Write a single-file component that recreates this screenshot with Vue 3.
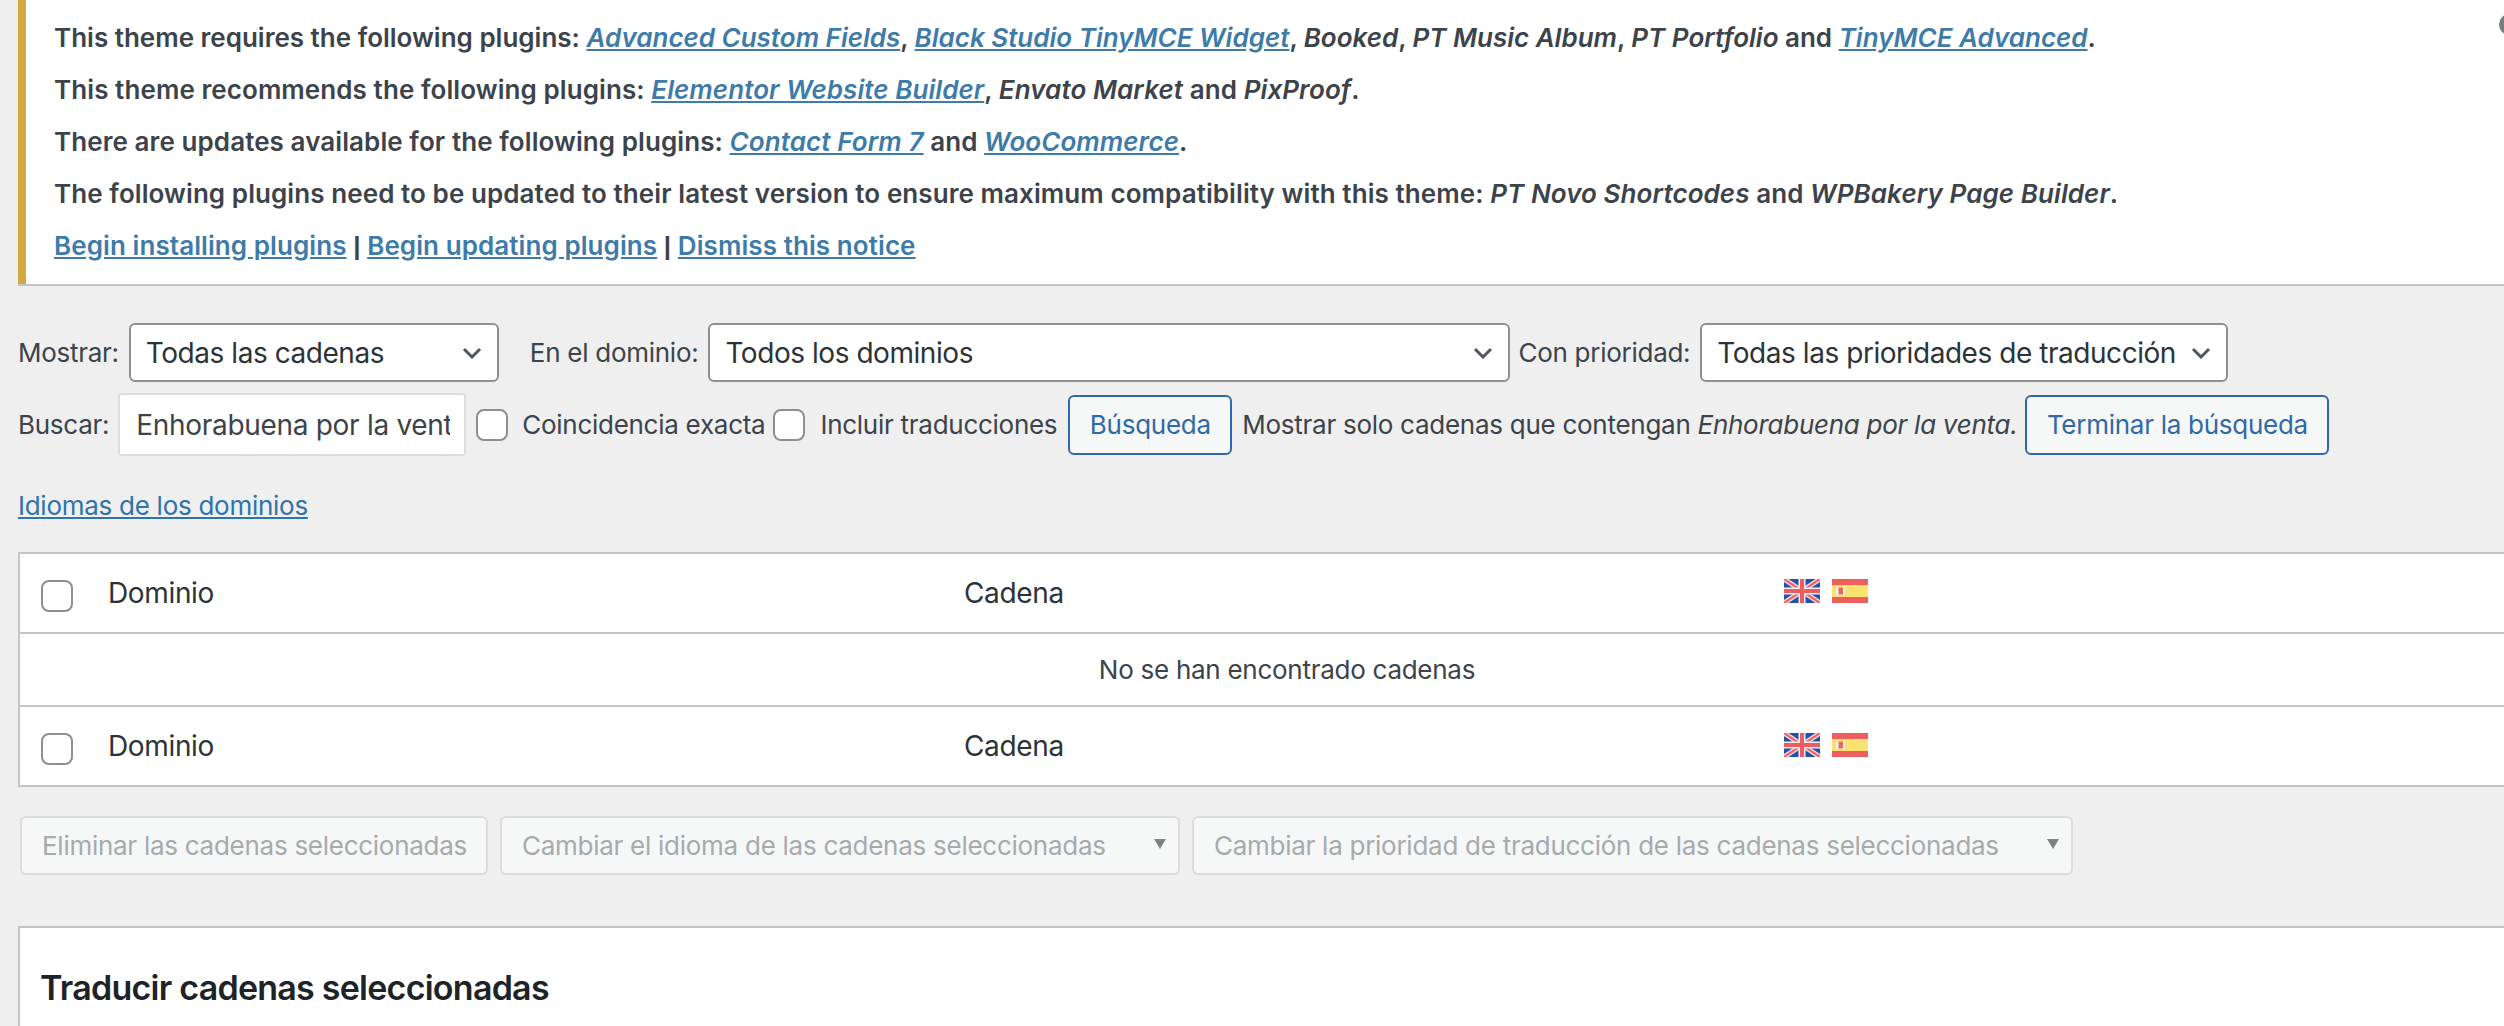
<script setup>
const filters = ['Todas las cadenas']
</script>

<template>
  <div class="page">
    <div class="notice">
      <span class="dismiss"></span>
      <p class="tight">This theme requires the following plugins: <a><em>Advanced Custom Fields</em></a>, <a><em>Black Studio TinyMCE Widget</em></a>, <em>Booked</em>, <em>PT Music Album</em>, <em>PT Portfolio</em> and <a><em>TinyMCE Advanced</em></a>.</p>
      <p>This theme recommends the following plugins: <a><em>Elementor Website Builder</em></a>, <em>Envato Market</em> and <em>PixProof</em>.</p>
      <p>There are updates available for the following plugins: <a><em>Contact Form 7</em></a> and <a><em>WooCommerce</em></a>.</p>
      <p>The following plugins need to be updated to their latest version to ensure maximum compatibility with this theme: <em>PT Novo Shortcodes</em> and <em>WPBakery Page Builder</em>.</p>
      <p><a>Begin installing plugins</a> <span class="sep">|</span> <a>Begin updating plugins</a> <span class="sep">|</span> <a>Dismiss this notice</a></p>
    </div>

    <div class="content">
      <div class="filter-row first">
        <label>Mostrar:</label>
        <select class="sel sel-a"><option>{{ filters[0] }}</option></select>
        <label class="l-dom">En el dominio:</label>
        <select class="sel sel-b"><option>Todos los dominios</option></select>
        <label class="l-pri">Con prioridad:</label>
        <select class="sel sel-c"><option>Todas las prioridades de traducción</option></select>
      </div>

      <div class="filter-row second">
        <label>Buscar:</label>
        <input class="search" type="text" value="Enhorabuena por la venta" />
        <span class="check c-one"></span>
        <label class="l-exact">Coincidencia exacta</label>
        <span class="check c-two"></span>
        <label class="l-incl">Incluir traducciones</label>
        <button class="btn b-search">Búsqueda</button>
        <span class="showing">Mostrar solo cadenas que contengan <em>Enhorabuena por la venta.</em></span>
        <button class="btn b-end">Terminar la búsqueda</button>
      </div>

      <a class="domains">Idiomas de los dominios</a>

      <table class="strings">
        <colgroup>
          <col class="w1" /><col class="w2" /><col class="w3" /><col />
        </colgroup>
        <thead>
          <tr class="head">
            <th class="cb"><span class="check"></span></th>
            <th>Dominio</th>
            <th>Cadena</th>
            <th>
              <span class="flags">
                <svg class="flag" viewBox="0 0 36 24"><rect width="36" height="24" fill="#2450a8" /><path d="M0 0 36 24M36 0 0 24" stroke="#f3d5d8" stroke-width="5" /><path d="M0 0 36 24M36 0 0 24" stroke="#ee6064" stroke-width="2" /><path d="M18 0V24M0 12H36" stroke="#f7f0f2" stroke-width="7" /><path d="M18 0V24M0 12H36" stroke="#ee5c60" stroke-width="4" /></svg>
                <svg class="flag" viewBox="0 0 36 24"><rect width="36" height="24" fill="#ee5e5c" /><rect y="6" width="36" height="12" fill="#fae170" /><rect x="4" y="8" width="9" height="8" fill="#f2f0e8" /><rect x="6.5" y="8.5" width="4.5" height="7" fill="#ec6a50" /></svg>
              </span>
            </th>
          </tr>
        </thead>
        <tbody>
          <tr class="empty"><td colspan="4">No se han encontrado cadenas</td></tr>
        </tbody>
        <tfoot>
          <tr class="foot">
            <th class="cb"><span class="check"></span></th>
            <th>Dominio</th>
            <th>Cadena</th>
            <th>
              <span class="flags">
                <svg class="flag" viewBox="0 0 36 24"><rect width="36" height="24" fill="#2450a8" /><path d="M0 0 36 24M36 0 0 24" stroke="#f3d5d8" stroke-width="5" /><path d="M0 0 36 24M36 0 0 24" stroke="#ee6064" stroke-width="2" /><path d="M18 0V24M0 12H36" stroke="#f7f0f2" stroke-width="7" /><path d="M18 0V24M0 12H36" stroke="#ee5c60" stroke-width="4" /></svg>
                <svg class="flag" viewBox="0 0 36 24"><rect width="36" height="24" fill="#ee5e5c" /><rect y="6" width="36" height="12" fill="#fae170" /><rect x="4" y="8" width="9" height="8" fill="#f2f0e8" /><rect x="6.5" y="8.5" width="4.5" height="7" fill="#ec6a50" /></svg>
              </span>
            </th>
          </tr>
        </tfoot>
      </table>

      <div class="actions">
        <button class="dis d-del" disabled>Eliminar las cadenas seleccionadas</button>
        <button class="dis d-lang" disabled>Cambiar el idioma de las cadenas seleccionadas<i class="tri"></i></button>
        <button class="dis d-prio" disabled>Cambiar la prioridad de traducción de las cadenas seleccionadas<i class="tri"></i></button>
      </div>

      <section class="panel">
        <h3>Traducir cadenas seleccionadas</h3>
      </section>
    </div>
  </div>
</template>

<style>
html, body { margin: 0; background: #efefef; overflow: hidden; }
</style>

<style scoped>
.page {
  width: 2504px;
  height: 1026px;
  overflow: hidden;
  background: #efefef;
  color: #3c434a;
  font-family: Inter, "Noto Sans", sans-serif;
  font-size: 26px;
  letter-spacing: -0.27px;
}
.notice {
  position: relative;
  margin-left: 18px;
  height: 260px;
  padding: 12px 0 12px 28px;
  background: #fff;
  border-left: 8px solid #d6a840;
  box-shadow: 0 2px 0 #c3c4c7;
  font-weight: 600;
  letter-spacing: 0.08px;
}
.notice p { margin: 0; line-height: 52px; }
.notice .tight { letter-spacing: 0; }
.notice a { color: #3e7ba8; text-decoration: underline; }
.sep { font-family: "Liberation Sans", sans-serif; }
.dismiss {
  position: absolute;
  left: 2473px;
  top: 14px;
  width: 21px;
  height: 21px;
  border-radius: 50%;
  background: #787c82;
}
.content { padding: 39px 0 0 18px; }
.filter-row { display: flex; align-items: center; white-space: nowrap; }
.first { height: 59px; }
.second { height: 63px; margin-top: 11px; }
.sel {
  appearance: none;
  box-sizing: border-box;
  height: 59px;
  margin: 0;
  padding: 0 30px 0 15px;
  background: #fff url("data:image/svg+xml,%3Csvg xmlns='http://www.w3.org/2000/svg' width='20' height='12'%3E%3Cpath d='M2 2l8 8 8-8' fill='none' stroke='%2350575e' stroke-width='3'/%3E%3C/svg%3E") no-repeat right 15px center;
  border: 2px solid #8c8f94;
  border-radius: 6px;
  color: #2c3338;
  font: inherit;
  font-size: 28px;
  letter-spacing: -0.45px;
}
.sel-a { width: 370px; margin-left: 10px; }
.sel-b { width: 802px; margin-left: 10px; }
.sel-c { width: 528px; margin-left: 10px; }
.l-dom { margin-left: 31px; }
.l-pri { margin-left: 8px; }
.search {
  box-sizing: border-box;
  width: 348px;
  height: 63px;
  margin: 0 0 0 9px;
  padding: 0 14px 0 16px;
  background: #fff;
  border: 2px solid #dcdcde;
  border-radius: 4px;
  color: #3c434a;
  font: inherit;
  font-size: 28px;
  letter-spacing: -0.3px;
  outline: none;
}
.check {
  display: inline-block;
  flex: none;
  box-sizing: border-box;
  width: 32px;
  height: 32px;
  background: #fff;
  border: 2px solid #8c8f94;
  border-radius: 8px;
}
.c-one { margin-left: 10px; }
.c-two { margin-left: 8px; }
.l-exact { margin-left: 14px; }
.l-incl { margin-left: 15px; }
.btn {
  box-sizing: border-box;
  height: 60px;
  margin: 0;
  background: #f6f7f7;
  border: 2px solid #2f69a8;
  border-radius: 6px;
  color: #2f69a8;
  font: inherit;
  letter-spacing: inherit;
}
.b-search { width: 164px; margin-left: 11px; }
.b-end { width: 304px; margin-left: 8px; }
.showing { margin-left: 10px; }
.domains {
  display: block;
  margin-top: 32px;
  line-height: 36px;
  color: #2f73ab;
  text-decoration: underline;
}
.strings {
  width: 2538px;
  margin-top: 28px;
  border: 2px solid #c3c4c7;
  border-collapse: separate;
  border-spacing: 0;
  table-layout: fixed;
  background: #fff;
  font-size: 26px;
}
.w1 { width: 88px; }
.w2 { width: 856px; }
.w3 { width: 820px; }
.strings th { padding: 0; font-size: 28px; letter-spacing: -0.35px; font-weight: 400; text-align: left; color: #2c3338; }
.head th { height: 78px; border-bottom: 2px solid #c3c4c7; }
.empty td { height: 71px; text-align: center; padding: 0; }
.foot th { height: 78px; border-top: 2px solid #c3c4c7; }
.strings .cb { padding-left: 21px; }
.strings .cb .check { display: block; margin-top: 6px; }
.flags { display: flex; gap: 12px; margin-top: -4px; }
.foot .flags { margin-top: -3px; }
.flag { display: block; width: 36px; height: 24px; }
.actions { display: flex; margin-top: 29px; margin-left: 2px; gap: 12px; }
.dis {
  position: relative;
  box-sizing: border-box;
  height: 59px;
  margin: 0;
  padding: 0;
  text-align: left;
  background: #f6f7f7;
  border: 2px solid #dcdcde;
  border-radius: 6px;
  color: #a7aaad;
  font: inherit;
  letter-spacing: inherit;
}
.d-del { width: 468px; padding-left: 20px; }
.d-lang { width: 680px; padding-left: 20px; }
.d-prio { width: 881px; padding-left: 20px; }
.tri {
  position: absolute;
  right: 12px;
  top: 21px;
  width: 0;
  height: 0;
  border-left: 6px solid transparent;
  border-right: 6px solid transparent;
  border-top: 10px solid #808285;
}
.panel {
  box-sizing: border-box;
  width: 2538px;
  height: 200px;
  margin-top: 51px;
  background: #fff;
  border: 2px solid #c3c4c7;
}
h3 {
  margin: 40px 0 0 20px;
  color: #1d2327;
  font-size: 34px;
  line-height: 40px;
  font-weight: 600;
  letter-spacing: -0.75px;
}
</style>
